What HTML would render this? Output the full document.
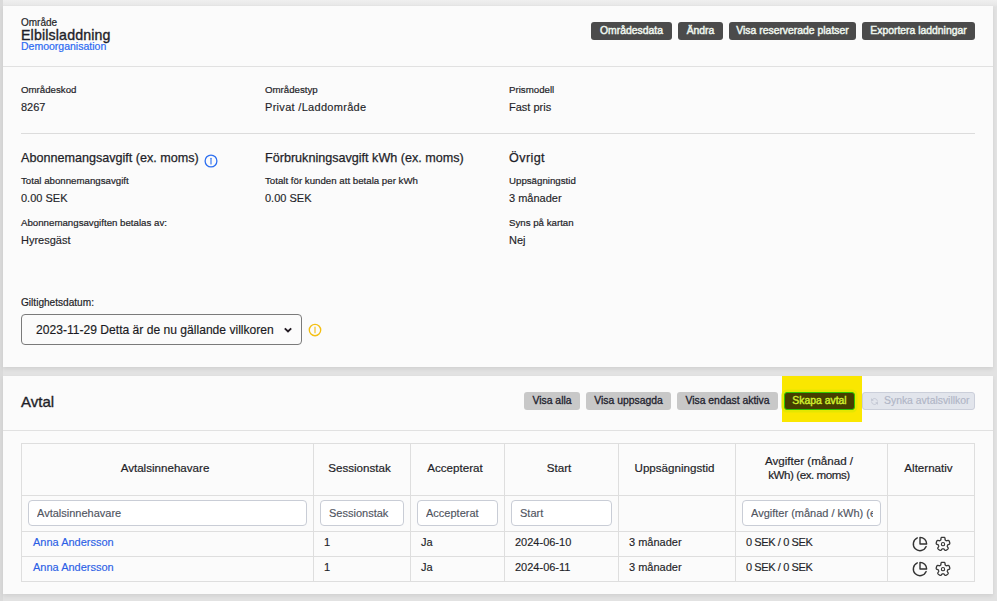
<!DOCTYPE html>
<html><head><meta charset="utf-8">
<style>
*{box-sizing:border-box;margin:0;padding:0}
html,body{width:997px;height:601px;overflow:hidden}
body{background:#e2e2e2;font-family:"Liberation Sans",sans-serif;color:#1f1f29;position:relative}
.strip{position:absolute;left:0;top:0;width:3px;height:601px;background:#dadada}
.topg{position:absolute;left:0;top:0;width:997px;height:7px;background:linear-gradient(#efefef,#e9e9e9 60%,#e2e2e2)}
.card{position:absolute;left:3px;width:990px;background:#fbfbfb;box-shadow:0 2px 4px rgba(0,0,0,0.08)}
#c1{top:6px;height:361px}
#c2{top:376px;height:218px}
.abs{position:absolute;white-space:nowrap;line-height:1}
.hr{position:absolute;height:1px;background:#e1e1e1}
.btn{position:absolute;height:18px;border-radius:3px;font-size:10px;line-height:18px;text-align:center;white-space:nowrap}
.dk{background:#4b4b4b;color:#eef6ee;font-size:10.4px;-webkit-text-stroke:0.45px #eef6ee}
.gr{background:#c8c8c8;color:#22222e;font-size:10.4px;-webkit-text-stroke:0.3px #22222e}
.lbl{font-size:9.7px;-webkit-text-stroke:0.2px #1f1f29}
.val{font-size:11px;-webkit-text-stroke:0.15px #1f1f29}
.h{font-size:12.6px;-webkit-text-stroke:0.25px #1f1f29}
.med{-webkit-text-stroke:0.35px #1f1f29}
table{position:absolute;left:18px;top:67px;width:954px;border-collapse:collapse;table-layout:fixed}
td,th{border:1px solid #dedede;font-size:11px;white-space:nowrap;overflow:hidden}
th{font-weight:normal;text-align:center;height:52px;color:#1f1f29;font-size:11.6px;padding:0 5px 4px 0;-webkit-text-stroke:0.2px #1f1f29}
.inp{width:100%;height:26px;border:1px solid #c9cdd6;border-radius:4px;background:#fff;font-size:11px;color:#50555f;-webkit-text-stroke:0.15px #50555f;line-height:24px;padding-left:8px;overflow:hidden;white-space:nowrap}
.inp span{display:block;overflow:hidden;margin-right:7px}
.fr td{height:36px;padding:0 6px 2px 6px}
.dr td{height:25px;padding:0 0 4px 10px;color:#1f1f29;-webkit-text-stroke:0.15px #1f1f29}
.lnk{color:#2b5fe6;-webkit-text-stroke:0.15px #2b5fe6}
.ic{text-align:center;padding:0 0 0 2px!important}
.ic svg{vertical-align:middle}
</style></head>
<body>
<div class="topg"></div><div class="strip"></div>
<div class="card" id="c1">
  <div class="abs" style="left:18px;top:11.5px;font-size:10px;-webkit-text-stroke:0.2px #1f1f29">Område</div>
  <div class="abs med" style="left:18px;top:22.2px;font-size:14.2px;letter-spacing:0.15px">Elbilsladdning</div>
  <div class="abs" style="left:18px;top:35.2px;font-size:10.5px;color:#2b6af2;-webkit-text-stroke:0.2px #2b6af2">Demoorganisation</div>
  <div class="btn dk" style="left:588px;top:16px;width:81px">Områdesdata</div>
  <div class="btn dk" style="left:675px;top:16px;width:45px">Ändra</div>
  <div class="btn dk" style="left:726px;top:16px;width:127px">Visa reserverade platser</div>
  <div class="btn dk" style="left:859px;top:16px;width:113px">Exportera laddningar</div>
  <div class="hr" style="left:0;top:60px;width:990px"></div>

  <div class="abs lbl" style="left:18px;top:78.9px">Områdeskod</div>
  <div class="abs val" style="left:18px;top:95.9px">8267</div>
  <div class="abs lbl" style="left:262px;top:78.9px">Områdestyp</div>
  <div class="abs val" style="left:262px;top:95.9px;letter-spacing:0.3px">Privat /Laddområde</div>
  <div class="abs lbl" style="left:506px;top:78.9px">Prismodell</div>
  <div class="abs val" style="left:506px;top:95.9px">Fast pris</div>
  <div class="hr" style="left:18px;top:127px;width:954px;background:#dcdcdc"></div>

  <div class="abs h" style="left:18px;top:145.5px">Abonnemangsavgift (ex. moms)</div>
  <svg class="abs" style="left:200.5px;top:148.4px" width="14" height="14" viewBox="0 0 14 14"><circle cx="7" cy="7" r="5.9" fill="none" stroke="#2d6ff0" stroke-width="1.3"/><line x1="7" y1="4.2" x2="7" y2="9.9" stroke="#2d6ff0" stroke-width="1.1" stroke-linecap="round"/></svg>
  <div class="abs h" style="left:262px;top:145.5px">Förbrukningsavgift kWh (ex. moms)</div>
  <div class="abs h" style="left:506px;top:145.5px;letter-spacing:0.4px">Övrigt</div>

  <div class="abs lbl" style="left:18px;top:170.1px">Total abonnemangsavgift</div>
  <div class="abs val" style="left:18px;top:186.7px">0.00 SEK</div>
  <div class="abs lbl" style="left:262px;top:170.1px">Totalt för kunden att betala per kWh</div>
  <div class="abs val" style="left:262px;top:186.7px">0.00 SEK</div>
  <div class="abs lbl" style="left:506px;top:170.1px">Uppsägningstid</div>
  <div class="abs val" style="left:506px;top:186.7px">3 månader</div>

  <div class="abs lbl" style="left:18px;top:211.8px">Abonnemangsavgiften betalas av:</div>
  <div class="abs val" style="left:18px;top:228.7px">Hyresgäst</div>
  <div class="abs lbl" style="left:506px;top:211.8px">Syns på kartan</div>
  <div class="abs val" style="left:506px;top:228.7px">Nej</div>

  <div class="abs" style="left:18px;top:292.2px;font-size:10.1px;-webkit-text-stroke:0.2px #1f1f29">Giltighetsdatum:</div>
  <div class="abs" style="left:18px;top:308px;width:281px;height:31px;border:1px solid #7a7a7a;border-radius:4px;background:#fbfbfb">
    <div class="abs" style="left:14px;top:8.8px;font-size:12.1px;color:#1a1a22;-webkit-text-stroke:0.15px #1a1a22">2023-11-29 Detta är de nu gällande villkoren</div>
    <svg class="abs" style="left:261px;top:10.5px" width="10" height="8" viewBox="0 0 10 8"><path d="M1.8 2.3 L5 5.5 L8.2 2.3" fill="none" stroke="#241c24" stroke-width="1.9"/></svg>
  </div>
  <svg class="abs" style="left:305.4px;top:317.4px" width="14" height="14" viewBox="0 0 14 14"><circle cx="7" cy="7" r="5.7" fill="none" stroke="#f4bf12" stroke-width="1.35"/><line x1="7" y1="4" x2="7" y2="9.8" stroke="#f4bf12" stroke-width="1.1" stroke-linecap="round"/></svg>
</div>

<div class="card" id="c2">
  <div class="abs med" style="left:18px;top:18.3px;font-size:15px">Avtal</div>
  <div class="btn gr" style="left:521px;top:16px;width:56px">Visa alla</div>
  <div class="btn gr" style="left:583px;top:16px;width:85px">Visa uppsagda</div>
  <div class="btn gr" style="left:674px;top:16px;width:101px">Visa endast aktiva</div>
  <div class="abs" style="left:779px;top:0px;width:80px;height:46px;background:#fae700"></div>
  <div class="btn" style="left:781px;top:16px;width:71px;background:#463e00;border:1.2px solid #2ec400;box-shadow:0 0 0 2.5px #e5e700;color:#d0f030;line-height:16px;font-size:10.4px;-webkit-text-stroke:0.4px #d0f030">Skapa avtal</div>
  <div class="btn" style="left:859px;top:16px;width:113px;background:#e2e5ec;border:1px solid #cbcfda;color:#b0b5c6;line-height:16px;font-size:10.4px;-webkit-text-stroke:0.15px #b0b5c6;text-align:left;padding-left:21px">Synka avtalsvillkor<svg style="position:absolute;left:7px;top:4px" width="9" height="9" viewBox="0 0 24 24" fill="none" stroke="#bcc0cd" stroke-width="1.9" stroke-linecap="round" stroke-linejoin="round"><path d="M20 11A8.1 8.1 0 0 0 4.5 9M4 5v4h4"/><path d="M4 13a8.1 8.1 0 0 0 15.5 2m.5 4v-4h-4"/></svg></div>
  <div class="hr" style="left:0;top:54px;width:990px"></div>

  <table>
    <colgroup><col style="width:292px"><col style="width:97px"><col style="width:94px"><col style="width:114px"><col style="width:117px"><col style="width:152px"><col style="width:87px"></colgroup>
    <tr><th>Avtalsinnehavare</th><th>Sessionstak</th><th>Accepterat</th><th>Start</th><th>Uppsägningstid</th><th style="white-space:normal;line-height:14px">Avgifter (månad /<br><span style="letter-spacing:-0.45px">kWh) (ex. moms)</span></th><th>Alternativ</th></tr>
    <tr class="fr"><td><div class="inp"><span>Avtalsinnehavare</span></div></td><td><div class="inp"><span>Sessionstak</span></div></td><td><div class="inp"><span>Accepterat</span></div></td><td><div class="inp"><span>Start</span></div></td><td></td><td><div class="inp"><span>Avgifter (månad / kWh) (ex. moms)</span></div></td><td></td></tr>
    <tr class="dr"><td style="padding-left:11px"><span class="lnk">Anna Andersson</span></td><td>1</td><td>Ja</td><td>2024-06-10</td><td>3 månader</td><td style="letter-spacing:-0.4px">0 SEK / 0 SEK</td><td class="ic"><svg width="16" height="16" viewBox="0 0 24 24" fill="none" stroke="#333" stroke-width="2.1" stroke-linecap="round" stroke-linejoin="round" style="position:relative;top:-0.5px;left:-0.5px"><path d="M21.21 15.89A10 10 0 1 1 8 2.83"/><path d="M22 12A10 10 0 0 0 12 2v10z"/></svg> <svg width="17" height="17" viewBox="0 0 24 24" fill="none" stroke="#383838" stroke-width="1.85" style="margin-left:2.5px;transform:translate(0.5px,-0.35px)"><path d="M12.00 2.31L12.25 2.31L12.51 2.32L12.76 2.34L13.01 2.37L13.26 2.40L13.51 2.45L13.76 2.50L14.00 2.58L14.23 2.69L14.45 2.86L14.64 3.10L14.78 3.45L14.86 3.93L14.89 4.47L14.90 4.99L14.93 5.41L14.99 5.72L15.09 5.95L15.20 6.11L15.32 6.25L15.45 6.37L15.59 6.48L15.73 6.58L15.86 6.68L16.00 6.78L16.15 6.88L16.29 6.98L16.44 7.07L16.61 7.14L16.81 7.19L17.05 7.21L17.36 7.17L17.77 7.07L18.27 6.92L18.79 6.79L19.27 6.72L19.65 6.74L19.94 6.84L20.16 7.00L20.34 7.19L20.49 7.39L20.62 7.61L20.74 7.83L20.85 8.06L20.95 8.29L21.05 8.53L21.14 8.76L21.22 9.00L21.29 9.25L21.36 9.49L21.42 9.74L21.48 9.99L21.52 10.24L21.55 10.49L21.57 10.74L21.57 10.99L21.54 11.25L21.45 11.50L21.28 11.76L20.99 12.00L20.56 12.22L20.05 12.42L19.56 12.60L19.17 12.75L18.90 12.91L18.71 13.06L18.59 13.22L18.50 13.38L18.42 13.54L18.36 13.70L18.31 13.87L18.25 14.03L18.20 14.20L18.15 14.36L18.10 14.53L18.07 14.70L18.05 14.88L18.05 15.09L18.11 15.32L18.25 15.61L18.47 15.96L18.76 16.39L19.06 16.85L19.27 17.28L19.37 17.65L19.36 17.96L19.28 18.22L19.15 18.44L19.00 18.65L18.84 18.84L18.67 19.02L18.48 19.20L18.29 19.37L18.10 19.53L17.90 19.69L17.70 19.84L17.49 19.99L17.28 20.13L17.06 20.26L16.84 20.39L16.62 20.51L16.39 20.62L16.16 20.72L15.92 20.79L15.66 20.84L15.39 20.84L15.10 20.75L14.78 20.55L14.43 20.21L14.09 19.79L13.77 19.38L13.50 19.06L13.27 18.84L13.06 18.71L12.87 18.64L12.69 18.60L12.52 18.59L12.34 18.58L12.17 18.57L12.00 18.57L11.83 18.57L11.66 18.58L11.48 18.59L11.31 18.60L11.13 18.64L10.94 18.71L10.73 18.84L10.50 19.06L10.23 19.38L9.91 19.79L9.57 20.21L9.22 20.55L8.90 20.75L8.61 20.84L8.34 20.84L8.08 20.79L7.84 20.72L7.61 20.62L7.38 20.51L7.16 20.39L6.94 20.26L6.72 20.13L6.51 19.99L6.30 19.84L6.10 19.69L5.90 19.53L5.71 19.37L5.52 19.20L5.33 19.02L5.16 18.84L5.00 18.65L4.85 18.44L4.72 18.22L4.64 17.96L4.63 17.65L4.73 17.28L4.94 16.85L5.24 16.39L5.53 15.96L5.75 15.61L5.89 15.32L5.95 15.09L5.95 14.88L5.93 14.70L5.90 14.53L5.85 14.36L5.80 14.20L5.75 14.03L5.69 13.87L5.64 13.70L5.58 13.54L5.50 13.38L5.41 13.22L5.29 13.06L5.10 12.91L4.83 12.75L4.44 12.60L3.95 12.42L3.44 12.22L3.01 12.00L2.72 11.76L2.55 11.50L2.46 11.25L2.43 10.99L2.43 10.74L2.45 10.49L2.48 10.24L2.52 9.99L2.58 9.74L2.64 9.49L2.71 9.25L2.78 9.00L2.86 8.76L2.95 8.53L3.05 8.29L3.15 8.06L3.26 7.83L3.38 7.61L3.51 7.39L3.66 7.19L3.84 7.00L4.06 6.84L4.35 6.74L4.73 6.72L5.21 6.79L5.73 6.92L6.23 7.07L6.64 7.17L6.95 7.21L7.19 7.19L7.39 7.14L7.56 7.07L7.71 6.98L7.85 6.88L8.00 6.78L8.14 6.68L8.27 6.58L8.41 6.48L8.55 6.37L8.68 6.25L8.80 6.11L8.91 5.95L9.01 5.72L9.07 5.41L9.10 4.99L9.11 4.47L9.14 3.93L9.22 3.45L9.36 3.10L9.55 2.86L9.77 2.69L10.00 2.58L10.24 2.50L10.49 2.45L10.74 2.40L10.99 2.37L11.24 2.34L11.49 2.32L11.75 2.31Z"/><circle cx="12" cy="12" r="2.3" stroke-width="1.6"/></svg></td></tr>
    <tr class="dr"><td style="padding-left:11px"><span class="lnk">Anna Andersson</span></td><td>1</td><td>Ja</td><td>2024-06-11</td><td>3 månader</td><td style="letter-spacing:-0.4px">0 SEK / 0 SEK</td><td class="ic"><svg width="16" height="16" viewBox="0 0 24 24" fill="none" stroke="#333" stroke-width="2.1" stroke-linecap="round" stroke-linejoin="round" style="position:relative;top:-0.5px;left:-0.5px"><path d="M21.21 15.89A10 10 0 1 1 8 2.83"/><path d="M22 12A10 10 0 0 0 12 2v10z"/></svg> <svg width="17" height="17" viewBox="0 0 24 24" fill="none" stroke="#383838" stroke-width="1.85" style="margin-left:2.5px;transform:translate(0.5px,-0.35px)"><path d="M12.00 2.31L12.25 2.31L12.51 2.32L12.76 2.34L13.01 2.37L13.26 2.40L13.51 2.45L13.76 2.50L14.00 2.58L14.23 2.69L14.45 2.86L14.64 3.10L14.78 3.45L14.86 3.93L14.89 4.47L14.90 4.99L14.93 5.41L14.99 5.72L15.09 5.95L15.20 6.11L15.32 6.25L15.45 6.37L15.59 6.48L15.73 6.58L15.86 6.68L16.00 6.78L16.15 6.88L16.29 6.98L16.44 7.07L16.61 7.14L16.81 7.19L17.05 7.21L17.36 7.17L17.77 7.07L18.27 6.92L18.79 6.79L19.27 6.72L19.65 6.74L19.94 6.84L20.16 7.00L20.34 7.19L20.49 7.39L20.62 7.61L20.74 7.83L20.85 8.06L20.95 8.29L21.05 8.53L21.14 8.76L21.22 9.00L21.29 9.25L21.36 9.49L21.42 9.74L21.48 9.99L21.52 10.24L21.55 10.49L21.57 10.74L21.57 10.99L21.54 11.25L21.45 11.50L21.28 11.76L20.99 12.00L20.56 12.22L20.05 12.42L19.56 12.60L19.17 12.75L18.90 12.91L18.71 13.06L18.59 13.22L18.50 13.38L18.42 13.54L18.36 13.70L18.31 13.87L18.25 14.03L18.20 14.20L18.15 14.36L18.10 14.53L18.07 14.70L18.05 14.88L18.05 15.09L18.11 15.32L18.25 15.61L18.47 15.96L18.76 16.39L19.06 16.85L19.27 17.28L19.37 17.65L19.36 17.96L19.28 18.22L19.15 18.44L19.00 18.65L18.84 18.84L18.67 19.02L18.48 19.20L18.29 19.37L18.10 19.53L17.90 19.69L17.70 19.84L17.49 19.99L17.28 20.13L17.06 20.26L16.84 20.39L16.62 20.51L16.39 20.62L16.16 20.72L15.92 20.79L15.66 20.84L15.39 20.84L15.10 20.75L14.78 20.55L14.43 20.21L14.09 19.79L13.77 19.38L13.50 19.06L13.27 18.84L13.06 18.71L12.87 18.64L12.69 18.60L12.52 18.59L12.34 18.58L12.17 18.57L12.00 18.57L11.83 18.57L11.66 18.58L11.48 18.59L11.31 18.60L11.13 18.64L10.94 18.71L10.73 18.84L10.50 19.06L10.23 19.38L9.91 19.79L9.57 20.21L9.22 20.55L8.90 20.75L8.61 20.84L8.34 20.84L8.08 20.79L7.84 20.72L7.61 20.62L7.38 20.51L7.16 20.39L6.94 20.26L6.72 20.13L6.51 19.99L6.30 19.84L6.10 19.69L5.90 19.53L5.71 19.37L5.52 19.20L5.33 19.02L5.16 18.84L5.00 18.65L4.85 18.44L4.72 18.22L4.64 17.96L4.63 17.65L4.73 17.28L4.94 16.85L5.24 16.39L5.53 15.96L5.75 15.61L5.89 15.32L5.95 15.09L5.95 14.88L5.93 14.70L5.90 14.53L5.85 14.36L5.80 14.20L5.75 14.03L5.69 13.87L5.64 13.70L5.58 13.54L5.50 13.38L5.41 13.22L5.29 13.06L5.10 12.91L4.83 12.75L4.44 12.60L3.95 12.42L3.44 12.22L3.01 12.00L2.72 11.76L2.55 11.50L2.46 11.25L2.43 10.99L2.43 10.74L2.45 10.49L2.48 10.24L2.52 9.99L2.58 9.74L2.64 9.49L2.71 9.25L2.78 9.00L2.86 8.76L2.95 8.53L3.05 8.29L3.15 8.06L3.26 7.83L3.38 7.61L3.51 7.39L3.66 7.19L3.84 7.00L4.06 6.84L4.35 6.74L4.73 6.72L5.21 6.79L5.73 6.92L6.23 7.07L6.64 7.17L6.95 7.21L7.19 7.19L7.39 7.14L7.56 7.07L7.71 6.98L7.85 6.88L8.00 6.78L8.14 6.68L8.27 6.58L8.41 6.48L8.55 6.37L8.68 6.25L8.80 6.11L8.91 5.95L9.01 5.72L9.07 5.41L9.10 4.99L9.11 4.47L9.14 3.93L9.22 3.45L9.36 3.10L9.55 2.86L9.77 2.69L10.00 2.58L10.24 2.50L10.49 2.45L10.74 2.40L10.99 2.37L11.24 2.34L11.49 2.32L11.75 2.31Z"/><circle cx="12" cy="12" r="2.3" stroke-width="1.6"/></svg></td></tr>
  </table>
</div>
</body></html>
